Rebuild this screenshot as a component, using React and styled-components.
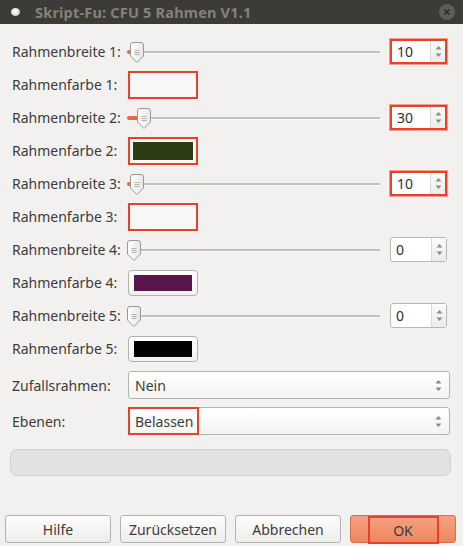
import React from 'react';
import styled, { createGlobalStyle } from 'styled-components';

const GlobalStyle = createGlobalStyle`
  body {
    margin: 0;
    background: #f2f1f0;
    font-family: 'Noto Sans', 'Open Sans', sans-serif;
  }
`;

const Window = styled.div`
  width: 463px;
  height: 546px;
  display: flex;
  flex-direction: column;
  background: #f2f1f0;
  overflow: hidden;
`;

const TitleBar = styled.div`
  height: 24px;
  flex-shrink: 0;
  background: #3c3b37;
  display: flex;
  align-items: center;
  padding: 0 8px 0 11px;
  gap: 15px;

  .title {
    flex: 1;
    color: #85827b;
    font-weight: 700;
    font-size: 14.5px;
    letter-spacing: 0.2px;
  }
`;

const AppDot = styled.span`
  width: 9px;
  height: 8px;
  border-radius: 50%;
  background: radial-gradient(circle at 45% 40%, #ffffff 0%, #dcdcdc 60%, #9a9a9a 100%);
`;

const CloseBtn = styled.span`
  width: 16px;
  height: 16px;
  border-radius: 50%;
  background: #5e5d59;
  display: flex;
  align-items: center;
  justify-content: center;
`;

const Form = styled.div`
  display: flex;
  flex-direction: column;
  gap: 6px;
  padding: 14px 13px 0 12px;
`;

const Row = styled.div`
  display: flex;
  align-items: center;
  height: ${(p) => p.$h || 27}px;
  margin-top: ${(p) => p.$mt || 0}px;
`;

const Label = styled.span`
  width: 116px;
  flex-shrink: 0;
  font-size: 14px;
  color: #3c3c3c;
`;

const SliderWrap = styled.div`
  position: relative;
  flex: 1;
  height: 22px;
  margin-left: -1px;
`;

const Track = styled.div`
  position: absolute;
  left: 0;
  right: 0;
  top: 10px;
  height: 2px;
  background: #c3c1be;
  border-bottom: 1px solid #fbfbfa;
`;

const Fill = styled.div`
  position: absolute;
  left: 0;
  top: 9px;
  height: 4px;
  border-radius: 2px;
  background: #e9683f;
`;

const Knob = styled.svg`
  position: absolute;
  top: 1px;
`;

const Spin = styled.div`
  width: 57px;
  height: 25px;
  margin: 0 3px 0 10px;
  box-sizing: border-box;
  display: flex;
  align-items: stretch;
  background: #fff;
  border: ${(p) => (p.$hl ? '2px solid #e5412b' : '1px solid #b9b7b4')};
  border-radius: ${(p) => (p.$hl ? 0 : 3)}px;
  outline: ${(p) => (p.$hl ? '1px solid #f0a090' : 'none')};

  .value {
    flex: 1;
    display: flex;
    align-items: center;
    padding-left: 5px;
    font-size: 14px;
    color: #2e2e2e;
  }
`;

const Stepper = styled.div`
  width: 14px;
  border-left: 1px solid #dcdad7;
  background: linear-gradient(#fbfbfb, #ebebea);
  display: flex;
  align-items: center;
  justify-content: center;
`;

const ColorButton = styled.div`
  width: 70px;
  height: ${(p) => (p.$hl ? 28 : 26)}px;
  box-sizing: border-box;
  padding: ${(p) => (p.$hl ? '3px 3px' : '4px 5px')};
  border: ${(p) => (p.$hl ? '2px solid #e5412b' : '1px solid #b3b1ae')};
  border-radius: ${(p) => (p.$hl ? 0 : 4)}px;
  background: ${(p) => (p.$hl ? '#f7f7f7' : 'linear-gradient(#ffffff, #f1f1f0)')};
  display: flex;

  .swatch {
    flex: 1;
    background: ${(p) => p.$color};
  }
`;

const Combo = styled.div`
  flex: 1;
  height: 28px;
  box-sizing: border-box;
  border: 1px solid #b6b4b1;
  border-radius: 3px;
  background: linear-gradient(#ffffff, #f3f3f2);
  display: flex;
  align-items: stretch;
  justify-content: space-between;
  font-size: 14px;
  color: #3c3c3c;
  padding-right: 7px;
`;

const ComboText = styled.span`
  display: flex;
  align-items: center;
  box-sizing: border-box;
  padding: 0 ${(p) => (p.$hl ? 5 : 6)}px;
  width: ${(p) => (p.$hl ? '71px' : 'auto')};
  margin: ${(p) => (p.$hl ? '-1px 0 -1px -1px' : '0')};
  border: ${(p) => (p.$hl ? '2px solid #e5412b' : 'none')};
`;

const Arrows = styled.span`
  display: flex;
  align-items: center;
`;

const Progress = styled.div`
  height: 25px;
  margin: 14px 12px 0 10px;
  border-radius: 7px;
  border: 1px solid #d3d1ce;
  background: #e4e2e0;
`;

const ButtonBar = styled.div`
  margin-top: auto;
  display: flex;
  gap: 9px;
  padding: 0 7px 3px 5px;
`;

const Button = styled.div`
  width: 106px;
  height: 28px;
  box-sizing: border-box;
  border-radius: 3px;
  border: 1px solid ${(p) => (p.$primary ? '#d4704d' : '#b5b3b0')};
  background: ${(p) =>
    p.$primary ? 'linear-gradient(#f6a181, #ef8660)' : 'linear-gradient(#fdfdfd, #ededec)'};
  display: flex;
  align-items: center;
  justify-content: center;
  font-size: 14px;
  color: #3c3c3c;
`;

const OkMark = styled.span`
  width: 71px;
  height: 28px;
  box-sizing: border-box;
  border: 2px solid #e5412b;
  margin-top: 2px;
  display: flex;
  align-items: center;
  justify-content: center;
`;

const UpDown = ({ color = '#8c8a86' }) => (
  <svg width="7" height="13" viewBox="0 0 7 13">
    <path d="M3.5 1 L6.5 4.5 H0.5 Z" fill={color} />
    <path d="M3.5 12 L6.5 8.5 H0.5 Z" fill={color} />
  </svg>
);

const Slider = ({ value }) => {
  const left = value / 3;
  return (
    <SliderWrap>
      <Track />
      {value > 0 && <Fill style={{ width: left + 3 }} />}
      <Knob width="14" height="21" viewBox="0 0 14 21" style={{ left }}>
        <defs>
          <linearGradient id="kg" x1="0" y1="0" x2="1" y2="0">
            <stop offset="0" stopColor="#ffffff" />
            <stop offset="1" stopColor="#e6e6e5" />
          </linearGradient>
        </defs>
        <path
          d="M3 0.5 H11 A2.5 2.5 0 0 1 13.5 3 V14 L7 20.5 L0.5 14 V3 A2.5 2.5 0 0 1 3 0.5 Z"
          fill="url(#kg)"
          stroke="#9b9996"
        />
        <path d="M4.5 8.5 H9.5 M4.5 10.5 H9.5 M4.5 12.5 H9.5" stroke="#b4b2af" strokeWidth="1" />
      </Knob>
    </SliderWrap>
  );
};

const WidthRow = ({ n, value, hl }) => (
  <Row>
    <Label>Rahmenbreite {n}:</Label>
    <Slider value={value} />
    <Spin $hl={hl}>
      <span className="value">{value}</span>
      <Stepper>
        <UpDown />
      </Stepper>
    </Spin>
  </Row>
);

const ColorRow = ({ n, color, hl }) => (
  <Row>
    <Label>Rahmenfarbe {n}:</Label>
    <ColorButton $hl={hl} $color={color}>
      <span className="swatch" />
    </ColorButton>
  </Row>
);

const frames = [
  { value: 10, hl: true, color: '#f7f7f7', chl: true },
  { value: 30, hl: true, color: '#2e3c13', chl: true },
  { value: 10, hl: true, color: '#f7f7f7', chl: true },
  { value: 0, hl: false, color: '#5a164c', chl: false },
  { value: 0, hl: false, color: '#000000', chl: false },
];

export default function App() {
  return (
    <>
      <GlobalStyle />
      <Window>
        <TitleBar>
          <AppDot />
          <span className="title">Skript-Fu: CFU 5 Rahmen V1.1</span>
          <CloseBtn>
            <svg width="8" height="8" viewBox="0 0 8 8">
              <path d="M1.5 1.5 L6.5 6.5 M6.5 1.5 L1.5 6.5" stroke="#2f2e2b" strokeWidth="1.6" />
            </svg>
          </CloseBtn>
        </TitleBar>
        <Form>
          {frames.map((f, i) => (
            <React.Fragment key={i}>
              <WidthRow n={i + 1} value={f.value} hl={f.hl} />
              <ColorRow n={i + 1} color={f.color} hl={f.chl} />
            </React.Fragment>
          ))}
          <Row $h={28} $mt={3}>
            <Label>Zufallsrahmen:</Label>
            <Combo>
              <ComboText>Nein</ComboText>
              <Arrows>
                <UpDown color="#8a8884" />
              </Arrows>
            </Combo>
          </Row>
          <Row $h={28} $mt={2}>
            <Label>Ebenen:</Label>
            <Combo>
              <ComboText $hl>Belassen</ComboText>
              <Arrows>
                <UpDown color="#8a8884" />
              </Arrows>
            </Combo>
          </Row>
        </Form>
        <Progress />
        <ButtonBar>
          <Button>Hilfe</Button>
          <Button>Zurücksetzen</Button>
          <Button>Abbrechen</Button>
          <Button $primary>
            <OkMark>OK</OkMark>
          </Button>
        </ButtonBar>
      </Window>
    </>
  );
}
